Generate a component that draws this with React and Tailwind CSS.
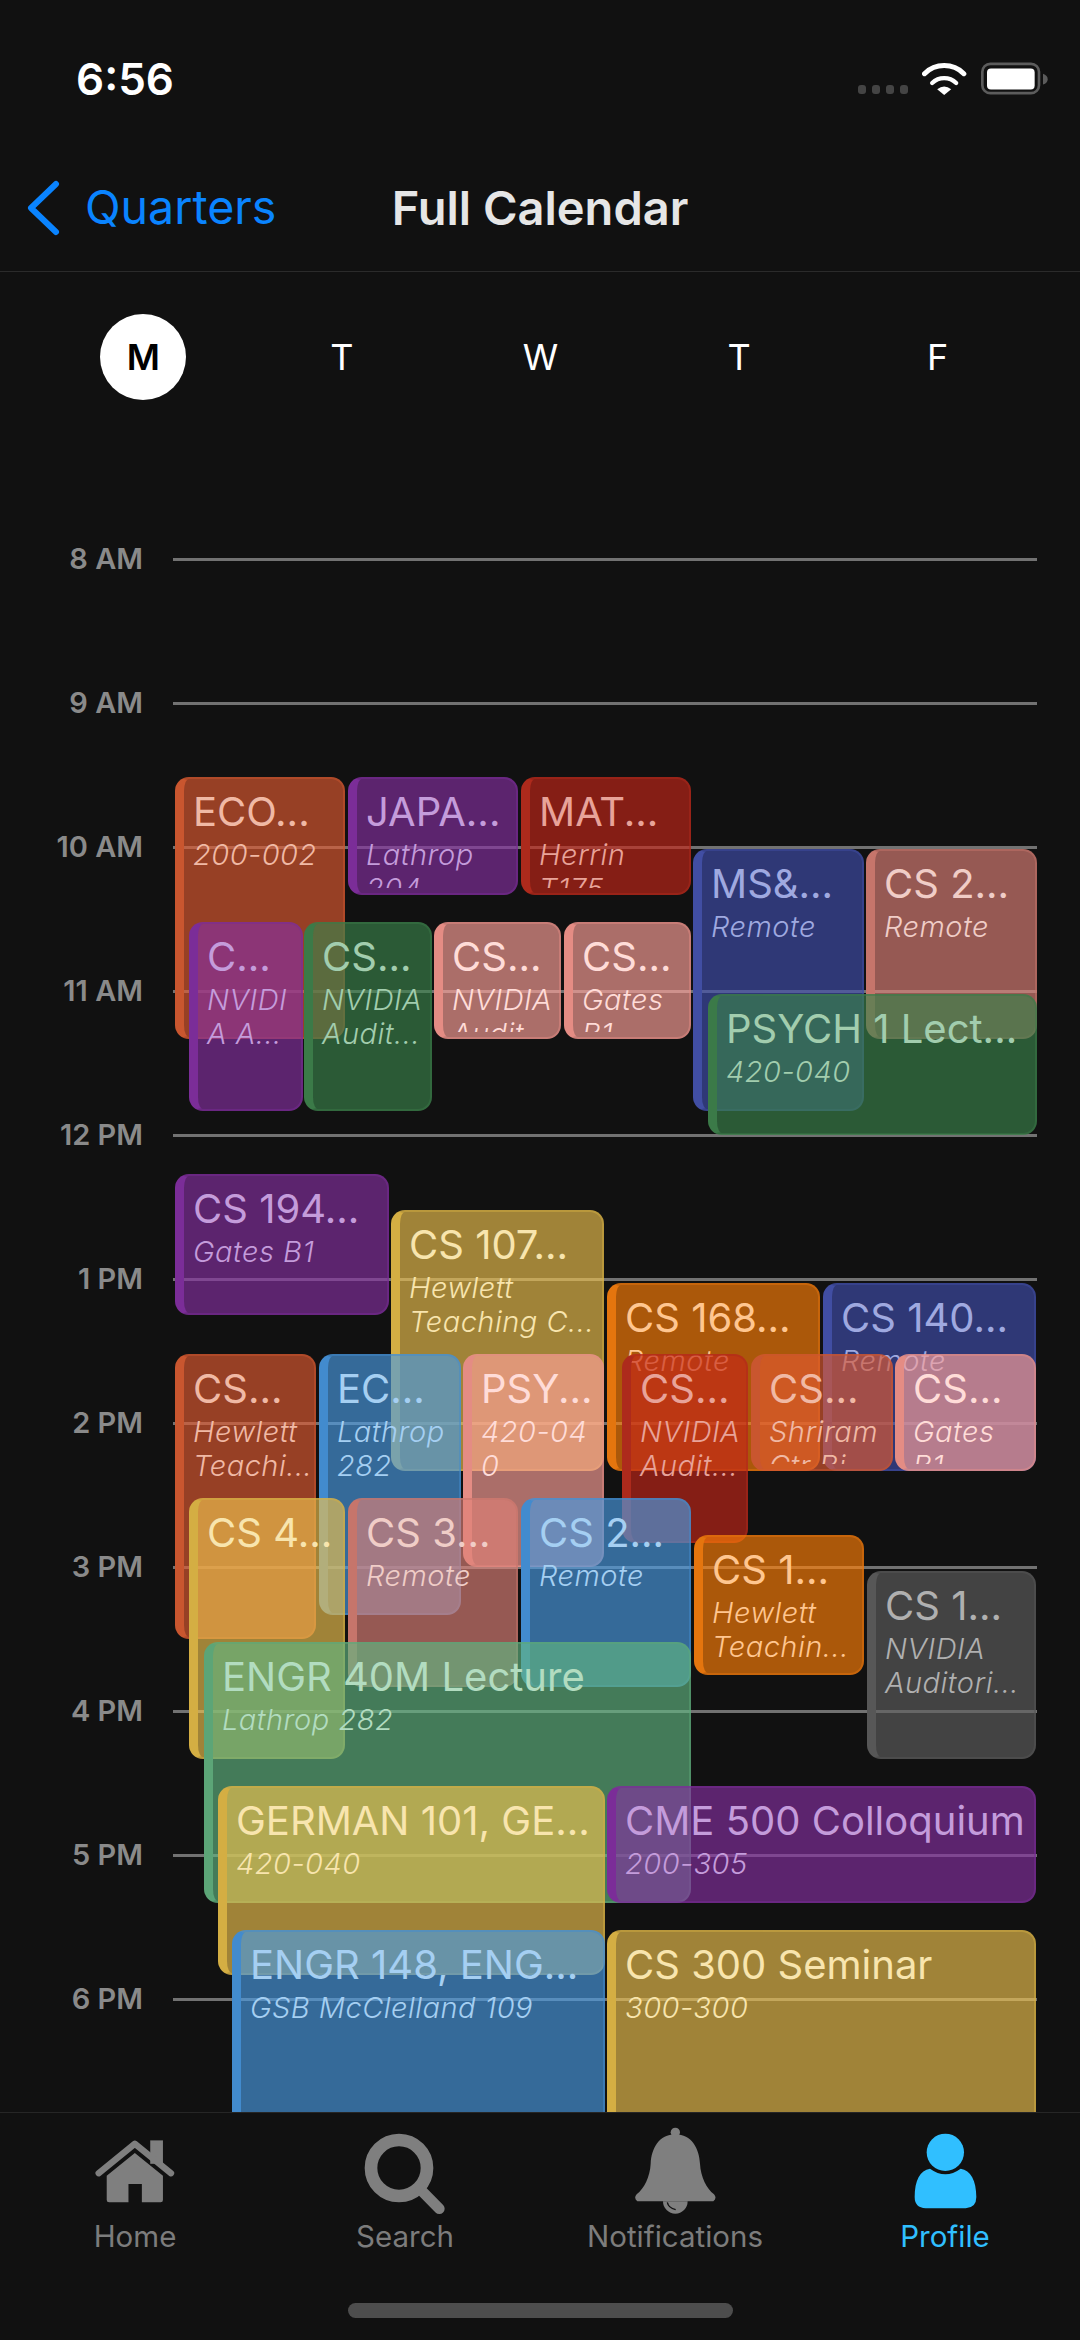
import React from 'react';

const palette = {
  purple: { card: 'bg-[#862fa1]/65 border-[#7b2d98]/50 border-l-[#7b2d98]', text: 'text-[#c49cdb]' },
  rust: { card: 'bg-[#e05a31]/65 border-[#c9562f]/50 border-l-[#c9562f]', text: 'text-[#f0b9a5]' },
  red: { card: 'bg-[#c42619]/65 border-[#ad2a1c]/50 border-l-[#ad2a1c]', text: 'text-[#e8a399]' },
  green: { card: 'bg-[#3b834b]/65 border-[#3b7a48]/50 border-l-[#3b7a48]', text: 'text-[#a2cdae]' },
  pink: { card: 'bg-[#ffa199]/65 border-[#e48c84]/50 border-l-[#e48c84]', text: 'text-[#ffdcd8]' },
  indigo: { card: 'bg-[#404fad]/65 border-[#414ea3]/50 border-l-[#414ea3]', text: 'text-[#9fa9e0]' },
  salmon: { card: 'bg-[#df8178]/65 border-[#c6756b]/50 border-l-[#c6756b]', text: 'text-[#f0cdc7]' },
  yellow: { card: 'bg-[#eec14f]/65 border-[#d4ae43]/50 border-l-[#d4ae43]', text: 'text-[#f8e5ae]' },
  blue: { card: 'bg-[#499be4]/65 border-[#428bce]/50 border-l-[#428bce]', text: 'text-[#a5cff2]' },
  orange: { card: 'bg-[#ff8008]/65 border-[#e4750e]/50 border-l-[#e4750e]', text: 'text-[#ffc690]' },
  grey: { card: 'bg-[#606060]/65 border-[#575757]/50 border-l-[#575757]', text: 'text-[#b0b0b0]' },
  mint: { card: 'bg-[#61b581]/65 border-[#5ca577]/50 border-l-[#5ca577]', text: 'text-[#b2dcc0]' },
};

// [color, title, location lines, left, right, top, bottom] in page pixels
const events = [
  ['rust', 'ECO...', ['200-002'], 175, 345, 777, 1039],
  ['purple', 'JAPA...', ['Lathrop', '204'], 348, 518, 777, 895],
  ['red', 'MAT...', ['Herrin', 'T175'], 521, 691, 777, 895],
  ['indigo', 'MS&...', ['Remote'], 693, 864, 849, 1111],
  ['salmon', 'CS 2...', ['Remote'], 866, 1037, 849, 1039],
  ['purple', 'C...', ['NVIDI', 'A A...'], 189, 303, 922, 1111],
  ['green', 'CS...', ['NVIDIA', 'Audit...'], 304, 432, 922, 1111],
  ['pink', 'CS...', ['NVIDIA', 'Audit...'], 434, 561, 922, 1039],
  ['pink', 'CS...', ['Gates', 'B1'], 564, 691, 922, 1039],
  ['green', 'PSYCH 1 Lect...', ['420-040'], 708, 1037, 994, 1135],
  ['purple', 'CS 194...', ['Gates B1'], 175, 389, 1174, 1315],
  ['yellow', 'CS 107...', ['Hewlett', 'Teaching C...'], 391, 604, 1210, 1471],
  ['orange', 'CS 168...', ['Remote'], 607, 820, 1283, 1471],
  ['indigo', 'CS 140...', ['Remote'], 823, 1036, 1283, 1471],
  ['rust', 'CS...', ['Hewlett', 'Teachi...'], 175, 316, 1354, 1639],
  ['blue', 'EC...', ['Lathrop', '282'], 319, 461, 1354, 1615],
  ['pink', 'PSY...', ['420-04', '0'], 463, 604, 1354, 1567],
  ['red', 'CS...', ['NVIDIA', 'Audit...'], 622, 748, 1354, 1543],
  ['rust', 'CS...', ['Shriram', 'Ctr Bi'], 751, 893, 1354, 1471],
  ['pink', 'CS...', ['Gates', 'B1'], 895, 1036, 1354, 1471],
  ['yellow', 'CS 4...', [], 189, 345, 1498, 1759],
  ['salmon', 'CS 3...', ['Remote'], 348, 518, 1498, 1687],
  ['blue', 'CS 2...', ['Remote'], 521, 691, 1498, 1687],
  ['orange', 'CS 1...', ['Hewlett', 'Teachin...'], 694, 864, 1535, 1675],
  ['grey', 'CS 1...', ['NVIDIA', 'Auditori...'], 867, 1036, 1571, 1759],
  ['mint', 'ENGR 40M Lecture', ['Lathrop 282'], 204, 691, 1642, 1903],
  ['yellow', 'GERMAN 101, GE...', ['420-040'], 218, 605, 1786, 1975],
  ['purple', 'CME 500 Colloquium', ['200-305'], 607, 1036, 1786, 1903],
  ['blue', 'ENGR 148, ENG...', ['GSB McClelland 109'], 232, 605, 1930, 2200],
  ['yellow', 'CS 300 Seminar', ['300-300'], 607, 1036, 1930, 2200],
];

const hours = ['8 AM', '9 AM', '10 AM', '11 AM', '12 PM', '1 PM', '2 PM', '3 PM', '4 PM', '5 PM', '6 PM', '7 PM'];
const days = ['M', 'T', 'W', 'T', 'F'];
const TIMELINE_TOP = 488;

const HomeIcon = () => (
  <svg className="mt-[11px] block" width="82" height="67" viewBox="40 50 245 200" fill="#7f7f7f">
    <path d="M208 60h38v70h-38z" />
    <path d="M54 158L162 70L270 158" fill="none" stroke="#7f7f7f" strokeWidth="19" strokeLinejoin="round" strokeLinecap="round" />
    <path d="M78 166L162 98L246 166V238Q246 245 239 245H183V190H143V245H85Q78 245 78 238Z" />
  </svg>
);

const SearchIcon = () => (
  <svg className="mt-[7px] block" width="82" height="82" viewBox="850 38 246 246" fill="none" stroke="#7f7f7f">
    <circle cx="955" cy="143" r="84" strokeWidth="38" />
    <path d="M1020 208L1076 265" strokeWidth="32" strokeLinecap="round" />
  </svg>
);

const BellIcon = () => (
  <svg className="mt-[1px] block" width="82" height="88" viewBox="40 20 246 264" fill="#7f7f7f">
    <circle cx="164" cy="36" r="14" />
    <path d="M164 42C115 42 92 85 90 130C88 170 70 205 48 222Q38 233 50 243H278Q290 233 280 222C258 205 240 170 238 130C236 85 213 42 164 42Z" />
    <path d="M127 243A37 37 0 0 0 201 243Z" />
    <path d="M140 246Q143 262 165 268" fill="none" stroke="#111111" strokeWidth="4" />
  </svg>
);

const ProfileIcon = () => (
  <svg className="mt-[7px] block" width="63" height="76" viewBox="880 38 189 228" fill="#30bfff">
    <circle cx="974" cy="96" r="56" />
    <path d="M928 145Q974 178 1020 145C1050 150 1067 180 1067 230Q1067 262 1035 264H915Q882 262 882 230C882 180 898 150 928 145Z" />
  </svg>
);

const WifiIcon = () => (
  <svg width="45" height="32" viewBox="245 36 134 96" fill="none" stroke="#ffffff" strokeLinecap="round">
    <path d="M252 68A84 84 0 0 1 370 68" strokeWidth="15" />
    <path d="M275 96A52 52 0 0 1 347 96" strokeWidth="13" />
    <path d="M311 132L290 115Q311 98 332 115Z" fill="#ffffff" stroke="none" />
  </svg>
);

const BatteryIcon = () => (
  <svg width="67" height="33" viewBox="424 36 201 98">
    <rect x="428" y="41" width="170" height="88" rx="24" fill="none" stroke="#5c5c5c" strokeWidth="8" />
    <rect x="442" y="55" width="143" height="63" rx="12" fill="#ffffff" />
    <path d="M610 71Q624 76 624 87Q624 98 610 103Z" fill="#5c5c5c" />
  </svg>
);

const EventCard = ({ color, title, lines, left, right, top, bottom }) => {
  const tone = palette[color];
  return (
    <div
      className={`absolute box-border rounded-[14px] border-2 border-l-[9px] pb-[5px] ${tone.card} ${tone.text}`}
      style={{ left, top: top - TIMELINE_TOP, width: right - left, height: bottom - top }}
    >
      <div className="h-full overflow-hidden pl-[9px] pt-[10px]">
        <div className="text-[40px] leading-[46px] whitespace-nowrap">{title}</div>
        <div className="mt-[3px] text-[29px] leading-[34px] italic font-light tracking-[0.5px] whitespace-nowrap">
          {lines.map((line, i) => (
            <div key={i}>{line}</div>
          ))}
        </div>
      </div>
    </div>
  );
};

const TabItem = ({ icon, label, active }) => (
  <div className="flex flex-col items-center">
    <div className="h-[88px]">{icon}</div>
    <span className={`mt-[4px] text-[29.5px] leading-[36px] ${active ? 'text-[#30bfff]' : 'text-[#7c7c7c]'}`}>{label}</span>
  </div>
);

export default function App() {
  return (
    <div className="flex h-[2340px] w-[1080px] flex-col overflow-hidden bg-[#111111] font-['Inter',sans-serif] text-white">
      {/* Status bar */}
      <div className="flex h-[158px] shrink-0 items-center justify-between pl-[76px] pr-[32px]">
        <span className="text-[44px] font-semibold leading-none">6:56</span>
        <div className="flex items-end gap-[14px] pb-[1px]">
          <div className="flex gap-[6px] pb-[1px]">
            <span className="h-[9px] w-[8px] rounded-[3px] bg-[#444444]" />
            <span className="h-[9px] w-[8px] rounded-[3px] bg-[#444444]" />
            <span className="h-[9px] w-[8px] rounded-[3px] bg-[#444444]" />
            <span className="h-[9px] w-[8px] rounded-[3px] bg-[#444444]" />
          </div>
          <WifiIcon />
          <BatteryIcon />
        </div>
      </div>

      {/* Nav bar */}
      <div className="grid h-[114px] shrink-0 grid-cols-[1fr_auto_1fr] items-center border-b border-[#2b2b2b] pb-[13px]">
        <div className="flex items-center gap-[25px] pl-[26px]">
          <svg width="34" height="56" viewBox="0 0 34 56" fill="none" stroke="#0a84ff" strokeWidth="6" strokeLinecap="round" strokeLinejoin="round">
            <path d="M30 4L5 28L30 52" />
          </svg>
          <span className="text-[46.5px] text-[#0a84ff]">Quarters</span>
        </div>
        <span className="text-[47px] font-semibold text-[#e6e6e6]">Full Calendar</span>
        <div />
      </div>

      {/* Calendar */}
      <div className="min-h-0 flex-1 overflow-hidden">
        <div className="grid h-[216px] grid-cols-5 pl-[44px] pr-[43px] pt-[42px]">
          {days.map((day, i) => (
            <div key={i} className="flex justify-center">
              <span
                className={`flex h-[86px] w-[86px] items-center justify-center rounded-full text-[36px] ${
                  i === 0 ? 'bg-white font-semibold text-black' : 'text-white'
                }`}
              >
                {day}
              </span>
            </div>
          ))}
        </div>
        <div className="relative">
          {hours.map((hour) => (
            <div key={hour} className="flex h-[144px] items-center pr-[43px]">
              <span className="mb-[2px] w-[143px] text-right text-[29px] font-semibold text-[#8a8a8a]">{hour}</span>
              <div className="mb-[1px] ml-[30px] h-[3px] flex-1 bg-[#727272]" />
            </div>
          ))}
          {events.map(([color, title, lines, left, right, top, bottom], i) => (
            <EventCard key={i} color={color} title={title} lines={lines} left={left} right={right} top={top} bottom={bottom} />
          ))}
        </div>
      </div>

      {/* Tab bar */}
      <div className="relative h-[228px] shrink-0 border-t border-[#262626] bg-[#111111]">
        <div className="grid grid-cols-4 pt-[13px]">
          <TabItem icon={<HomeIcon />} label="Home" />
          <TabItem icon={<SearchIcon />} label="Search" />
          <TabItem icon={<BellIcon />} label="Notifications" />
          <TabItem icon={<ProfileIcon />} label="Profile" active />
        </div>
        <div className="absolute left-[348px] top-[190px] h-[15px] w-[385px] rounded-full bg-[#4d4d4d]" />
      </div>
    </div>
  );
}
